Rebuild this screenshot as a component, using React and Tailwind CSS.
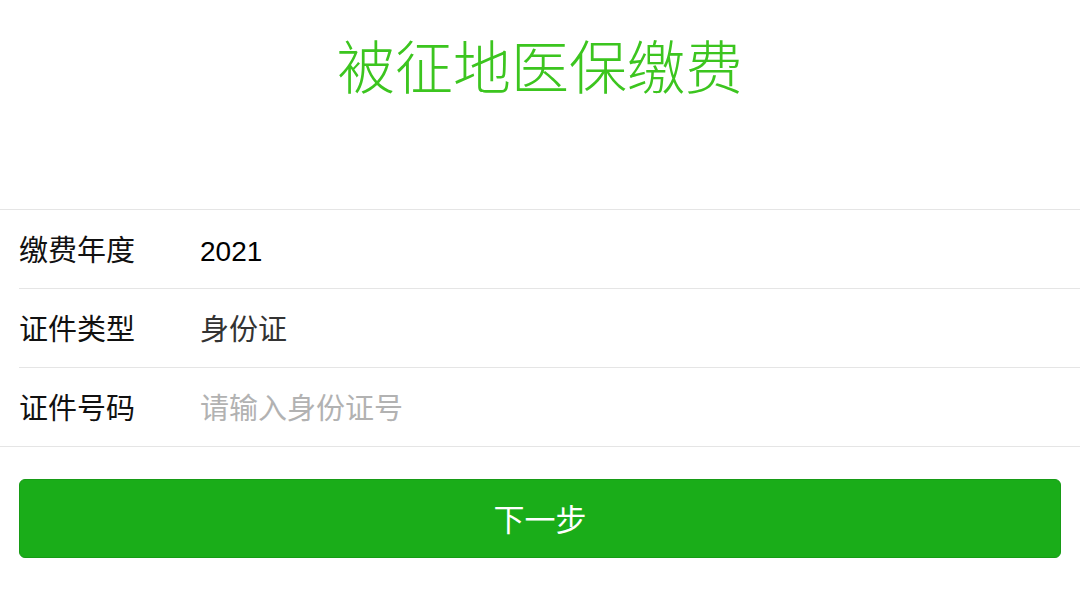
import React from "react";

const cjk = { fontFamily: '"Liberation Sans", "Noto Sans CJK SC", sans-serif' };

function Row({ label, children, first }) {
  return (
    <div className={first ? "" : "ml-[19px] border-t border-[#e5e5e5]"}>
      <div className={"flex items-center h-[78px] pt-[5px] text-[29px] " + (first ? "pl-[19px]" : "")}>
        <div className="w-[181px] shrink-0 text-[#111]">{label}</div>
        <div className="flex-1">{children}</div>
      </div>
    </div>
  );
}

export default function App() {
  return (
    <div className="bg-white w-[1080px] h-[601px] overflow-hidden" style={cjk}>
      <div className="h-[209px] pt-[31px] text-center">
        <h1 className="text-[#3cc51f] text-[58px] leading-[76px] font-light">
          被征地医保缴费
        </h1>
      </div>

      <div className="border-t border-b border-[#e5e5e5]">
        <Row label="缴费年度" first>
          <span className="text-[#000] text-[28px]">2021</span>
        </Row>
        <Row label="证件类型">
          <span className="text-[#333]">身份证</span>
        </Row>
        <Row label="证件号码">
          <input
            className="w-full outline-none bg-transparent text-[29px] placeholder-[#b2b2b2]"
            style={cjk}
            placeholder="请输入身份证号"
          />
        </Row>
      </div>

      <div className="px-[19px] pt-[32px]">
        <button className="w-full h-[79px] pt-[5px] rounded-[6px] bg-[#1aad19] border border-[#179b16] text-white text-[31px]">
          下一步
        </button>
      </div>
    </div>
  );
}
